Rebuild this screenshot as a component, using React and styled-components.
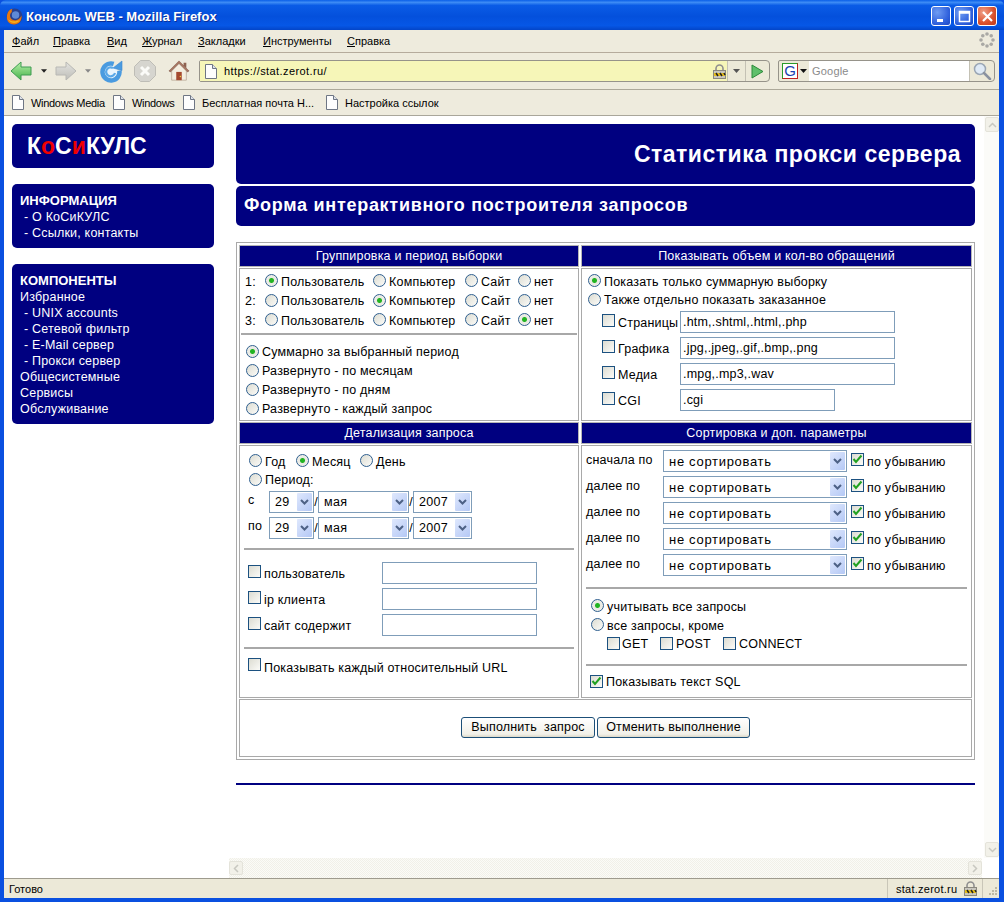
import React from "react";
import styled, { createGlobalStyle } from "styled-components";

const Global = createGlobalStyle`
  html, body { margin: 0; padding: 0; background: #fff; }
  body { font-family: "Liberation Sans", Arial, sans-serif; }
  #root { width: 1004px; height: 902px; overflow: hidden; }
  * { box-sizing: border-box; }
`;

const navy = "#000080";
const ui = `"Liberation Sans", Arial, sans-serif`;

/* ---------- window chrome ---------- */
const Win = styled.div`
  width: 1004px; height: 902px; display: flex; flex-direction: column;
  background: #0a50e0; overflow: hidden;
`;
const TitleBar = styled.div`
  height: 30px; flex: none; display: flex; align-items: center; padding: 2px 7px 0 6px;
  background: linear-gradient(180deg, #0a5fe8 0%, #3d8cf5 8%, #0a5ce6 18%, #0450dc 55%, #0657e6 85%, #0345c8 100%);
  border-radius: 6px 6px 0 0;
`;
const TitleText = styled.div`
  margin-left: 3px; flex: 1; color: #fff; font: bold 13px ${ui}; letter-spacing: 0;
  text-shadow: 1px 1px 0 #0a2f9a;
`;
const WinBtn = styled.div`
  width: 20px; height: 20px; margin-left: 3px; border: 1px solid #fff; border-radius: 3px;
  display: flex; align-items: center; justify-content: center;
  background: ${p => p.$close
    ? "radial-gradient(circle at 30% 30%, #f0a088, #d9502c 60%, #c23a18)"
    : "radial-gradient(circle at 30% 30%, #6f9cf2, #2f60dc 65%, #1c47c4)"};
`;
const Inner = styled.div`
  flex: 1; min-height: 0; display: flex; flex-direction: column;
  margin: 0 5px 4px 4px; background: #ece9d8;
`;
const MenuBar = styled.div`
  height: 23px; flex: none; display: flex; align-items: center; position: relative;
  border-bottom: 1px solid #b5ab9c; background: #eeebdd;
`;
const MenuItem = styled.span`
  width: ${p => p.$w}px; font: 11px ${ui}; color: #000; letter-spacing: 0;
  &:first-child { margin-left: 8px; }
  u { text-underline-offset: 1px; }
`;
const Throbber = styled.svg`
  position: absolute; right: 4px; top: 2px;
`;
const NavBar = styled.div`
  height: 37px; flex: none; display: flex; align-items: center;
  border-bottom: 1px solid #aca899; background: #eeebdd;
`;
const NavIcon = styled.svg`
  flex: none; margin-left: ${p => p.$ml || 0}px;
`;
const UrlBox = styled.div`
  margin-left: 9px; width: 571px; height: 22px; display: flex; align-items: stretch; flex: none;
  border: 1px solid #96938a; border-radius: 2px 4px 4px 2px; background: #ece9d8;
`;
const UrlField = styled.div`
  flex: 1; display: flex; align-items: center; background: #f6f6b8; padding-left: 5px; position: relative;
  font: 11px ${ui}; letter-spacing: 0.4px; color: #000;
`;
const UrlText = styled.span` margin-left: 7px; flex: 1; `;
const LockGap = styled.span` width: 1px; flex: none; `;
const UrlCell = styled.div`
  width: ${p => p.$w}px; flex: none; display: flex; align-items: center; justify-content: center;
  border-left: 1px solid #c4c1b4;
`;
const SearchBox = styled.div`
  margin-left: 8px; width: 217px; height: 22px; flex: none; display: flex; align-items: stretch;
  border: 1px solid #96938a; border-radius: 2px 4px 4px 2px; background: #ece9d8;
`;
const EngineCell = styled.div`
  width: 30px; flex: none; display: flex; align-items: center; padding-left: 3px; gap: 2px;
`;
const EngineLogo = styled.div`
  width: 16px; height: 16px; flex: none; border: 1px solid; border-color: #2a9a2a #c02020 #c02020 #2a9a2a; background: #fff;
  color: #1b3fb0; font: 15px/14px ${ui}; text-align: center; overflow: hidden;
`;
const SearchField = styled.div`
  width: 160px; flex: none; background: #fff; color: #8a8a8a; font: 11px ${ui}; padding-left: 3px;
  display: flex; align-items: center; letter-spacing: 0.2px;
`;
const SearchBtn = styled.div`
  flex: 1; display: flex; align-items: center; justify-content: center; border-left: 1px solid #c4c1b4;
`;
const BookBar = styled.div`
  height: 26px; flex: none; display: flex; align-items: center; background: #eeebdd;
  border-bottom: 1px solid #a9a69a; padding-left: 8px;
`;
const Bookmark = styled.div`
  width: ${p => p.$w}px; flex: none; display: flex; align-items: center; gap: 7px; font: 11px ${ui};
  color: #000; letter-spacing: ${p => p.$ls || 0}px; white-space: nowrap;
`;

/* ---------- page area ---------- */
const Viewport = styled.div`
  flex: 1; min-height: 0; background: #fff; position: relative; display: flex; flex-direction: column;
`;
const Page = styled.div`
  flex: 1; min-height: 0; display: flex; padding: 8px 0 0 8px; overflow: hidden;
`;
const Sidebar = styled.div`
  width: 202px; flex: none; display: flex; flex-direction: column; gap: 16px;
`;
const NavyBox = styled.div`
  background: ${navy}; border-radius: 5px; color: #fff;
`;
const LogoBox = styled(NavyBox)`
  height: 44px; padding: 9px 0 0 15px; font: bold 23px/26px ${ui}; letter-spacing: 0;
  span { color: #f00000; }
`;
const MenuBox = styled(NavyBox)`
  padding: 9px 8px 7px 8px; font: 12.500px/16px ${ui}; letter-spacing: 0.200px;
`;
const MenuHead = styled.div` font-weight: bold; font-size: 13px; letter-spacing: 0; `;
const MenuLink = styled.div` padding-left: ${p => p.$sub ? 4 : 0}px; white-space: nowrap; `;
const Main = styled.div`
  width: 739px; flex: none; margin-left: 22px; display: flex; flex-direction: column;
`;
const Banner = styled(NavyBox)`
  height: 60px; display: flex; align-items: center; justify-content: flex-end; padding: 0 14px 0 0;
  font: bold 23px ${ui}; letter-spacing: 0.500px;
`;
const SubBanner = styled(NavyBox)`
  margin-top: 2px; height: 40px; display: flex; align-items: center; padding: 0 0 2px 8px;
  font: bold 18px ${ui}; letter-spacing: 0.720px;
`;
const FormGrid = styled.div`
  margin-top: 16px; height: 518px; border: 1px solid #a9a9a9; padding: 2px;
  display: grid; grid-template-columns: 340px 391px; column-gap: 2px; row-gap: 1px;
  grid-template-rows: 22px 153px 22px 253px 58px;
  font: 12.500px ${ui}; letter-spacing: 0.200px; color: #000;
  background: #fff;
`;
const Head = styled.div`
  background: ${navy}; color: #fff; text-align: center; line-height: 21px; border: 1px solid #b5b5b5;
  font-size: 12.500px;
`;
const Cell = styled.div`
  border: 1px solid #a9a9a9; display: flex; flex-direction: column; min-width: 0;
  padding: ${p => p.$pad || "0"};
`;
const ButtonCell = styled(Cell)`
  grid-column: 1 / 3; flex-direction: row; justify-content: center; align-items: center; gap: 2px;
  padding-left: 0; padding-bottom: 2px;
`;
const Rule = styled.div`
  height: 2px; background: #a8a8a8; flex: none;
  margin: ${p => p.$m};
`;
const Row = styled.div`
  display: flex; align-items: center; height: ${p => p.$h || 20}px; flex: none; white-space: nowrap;
  padding-left: ${p => p.$pl || 0}px; gap: ${p => p.$gap || 0}px;
`;
const Fixed = styled.div`
  width: ${p => p.$w}px; flex: none; display: flex; align-items: center;
`;
const Lbl = styled.span`
  margin-left: ${p => p.$ml === undefined ? 3 : p.$ml}px;
  position: relative; top: ${p => p.$t || 0}px;
`;
const RadioDot = styled.span`
  width: 13px; height: 13px; flex: none; border-radius: 50%; border: 1px solid #2f5f8f;
  background: ${p => p.$on
    ? "radial-gradient(circle, #22b422 0 2px, #e9e9e2 3px, #f4f4ee 100%)"
    : "linear-gradient(135deg, #dcdcd2, #fbfbf8)"};
  position: relative; top: -1px;
`;
const CheckBox = styled.span`
  width: 13px; height: 13px; flex: none; border: 1px solid #1c5180; position: relative; top: ${p => p.$t === undefined ? -1 : p.$t}px;
  margin-left: ${p => p.$ml || 0}px;
  background: linear-gradient(135deg, #dcdcd2, #fbfbf8); display: flex; align-items: center; justify-content: center;
`;
const TextBox = styled.input`
  width: ${p => p.$w}px; height: 22px; flex: none; border: 1px solid #7f9db9; padding: 0 0 1px 2px; margin: 0;
  font: 12.500px ${ui}; letter-spacing: 0.200px; color: #000; background: #fff; outline: none;
`;
const SelectBox = styled.div`
  width: ${p => p.$w}px; height: 22px; flex: none; border: 1px solid #7f9db9; background: #fff;
  display: flex; align-items: center; justify-content: space-between; padding: 1px 1px 1px 5px;
  font-size: ${p => p.$wide ? 13 : 12.500}px; letter-spacing: ${p => p.$wide ? 0.700 : 0.300}px;
`;
const SelectBtn = styled.span`
  width: 15px; height: 18px; flex: none; background: linear-gradient(135deg, #dfe8fd, #b4c8f5);
  display: flex; align-items: center; justify-content: center; border-radius: 1px;
`;
const Slash = styled.span`
  width: ${p => p.$w || 4}px; flex: none; text-align: center;
`;
const Side = styled.span`
  width: ${p => p.$w}px; flex: none; position: relative; top: ${p => p.$t || 0}px;
`;
const SubmitBtn = styled.div`
  height: 21px; width: ${p => p.$w}px; border: 1px solid #1c4f78; border-radius: 3px;
  background: linear-gradient(180deg, #fff, #f1f0e8 85%, #dcd8c8); display: flex; align-items: center; justify-content: center;
  font: 12.500px ${ui}; letter-spacing: 0.150px; white-space: pre;
`;
const NavyLine = styled.div`
  margin-top: 23px; height: 2px; background: ${navy};
`;
const VScroll = styled.div`
  position: absolute; right: 0; top: 0; bottom: 20px; width: 15px; display: flex; flex-direction: column;
  justify-content: space-between; align-items: flex-end; padding: 1px 0; background: #fbfbf8;
`;
const HScroll = styled.div`
  position: absolute; left: 225px; right: 17px; bottom: 0; height: 20px; display: flex;
  justify-content: space-between; align-items: center;
  background: repeating-conic-gradient(#f1f0e8 0 25%, #fbfbf7 0 50%) 0 0 / 2px 2px;
`;
const ScrollBtn = styled.div`
  width: 14px; height: ${p => p.$h || 16}px; background: #f2f1e9; border: 1px solid #e4e3da; border-radius: 2px;
  display: flex; align-items: center; justify-content: center;
`;
const StatusBar = styled.div`
  height: 20px; flex: none; display: flex; align-items: center; background: #ece9d8;
  border-top: 1px solid #9e9b8e; font: 11px ${ui}; color: #000; padding-left: 5px;
`;
const StatusText = styled.div` flex: 1; `;
const StatusCell = styled.div`
  width: 96px; height: 100%; flex: none; display: flex; align-items: center; gap: 7px; padding-left: 8px;
  border-left: 1px solid #c9c6b8; border-right: 1px solid #c9c6b8; letter-spacing: 0.250px; white-space: nowrap;
`;
const Grip = styled.svg` margin: 4px 1px 0 3px; flex: none; `;

/* ---------- drawings ---------- */
const Doc = () => (
  <svg width="12" height="15" viewBox="0 0 12 15">
    <path d="M.5.5h7l4 4v10H.5z" fill="#fdfdfd" stroke="#6e7684" />
    <path d="M7.500.5v4h4" fill="#dfe3ea" stroke="#6e7684" />
  </svg>
);
const Lock = ({ s = 13 }) => (
  <svg width={s} height={s + 2} viewBox="0 0 13 15">
    <path d="M3 7V4.500a3.500 3.500 0 0 1 7 0V7" fill="none" stroke="#8f8f8f" strokeWidth="1.600" />
    <rect x="0.500" y="6.500" width="12" height="8" fill="#c9c7bd" stroke="#8a887e" />
    <path d="M1 9h11v3H1z" fill="#e6bd1a" />
    <path d="M3 9l2 3M7 9l2 3M11 9l1 2" stroke="#222" strokeWidth="1.500" />
  </svg>
);
const Arrow = ({ c = "#222" }) => (
  <svg width="7" height="4" viewBox="0 0 7 4"><path d="M0 0h7L3.500 4z" fill={c} /></svg>
);
const Chevron = () => (
  <svg width="9" height="6" viewBox="0 0 9 6"><path d="M1 1l3.500 3.500L8 1" fill="none" stroke="#4d6185" strokeWidth="2" /></svg>
);
const Tick = () => (
  <svg width="11" height="10" viewBox="0 0 11 10"><path d="M1.500 5l2.500 3L9.500 1.500" fill="none" stroke="#21a121" strokeWidth="2" /></svg>
);
const Fox = () => (
  <svg width="17" height="17" viewBox="0 0 16 16">
    <circle cx="8" cy="8" r="7.500" fill="#27408f" />
    <circle cx="9" cy="6.500" r="3.500" fill="#5f8ad6" />
    <path d="M.8 9C.8 4.500 3 1.500 6 .8c-.6 1-.7 2-.5 3C4 5 3.500 6.500 4 8.500c.8 2.500 3.500 3.500 6 2.800 2-.6 3.500-2 4.500-4.300.8 4.800-2.500 8.500-7 8.500C3.500 15.500.8 12.800.8 9z" fill="#e8780f" />
    <path d="M2 10c1 3 3 4 6 4 2 0 4-1 5-3-3 2-9 2-11-1z" fill="#f6b21c" />
  </svg>
);
const Back = ({ grey }) => (
  <NavIcon $ml={grey ? 8 : 6} width="22" height="22" viewBox="0 0 22 22">
    <defs>
      <linearGradient id={grey ? "gf" : "gb"} x1="0" y1="0" x2="0" y2="1">
        <stop offset="0" stopColor={grey ? "#e4e4e0" : "#b6f0a8"} />
        <stop offset="1" stopColor={grey ? "#bdbdb8" : "#46b24a"} />
      </linearGradient>
    </defs>
    <path d={grey ? "M1 7h10V2l10 9-10 9v-5H1z" : "M21 7H11V2L1 11l10 9v-5h10z"}
      fill={`url(#${grey ? "gf" : "gb"})`} stroke={grey ? "#b8b8b4" : "#3f9c52"} />
  </NavIcon>
);
const Reload = () => (
  <NavIcon $ml={9} width="23" height="23" viewBox="0 0 23 23">
    <circle cx="11" cy="12" r="6.500" fill="#eaf5fd" />
    <circle cx="11" cy="12" r="8.500" fill="none" stroke="#4a9be0" strokeWidth="4.500" strokeDasharray="44 10" transform="rotate(-10 11 12)" />
    <path d="M13 8l9-7v9.500z" fill="#4a9be0" stroke="#3a86d0" strokeWidth=".6" />
    <path d="M15 13a4.500 4.500 0 1 1-2-5" fill="none" stroke="#5aa8e8" strokeWidth="2.200" />
  </NavIcon>
);
const Stop = () => (
  <NavIcon $ml={11} width="22" height="22" viewBox="0 0 22 22">
    <path d="M6.500 .5h9l6 6v9l-6 6h-9l-6-6v-9z" fill="#d6d5cf" stroke="#bebdb6" />
    <path d="M7 7l8 8M15 7l-8 8" stroke="#fbfbf8" strokeWidth="3" />
  </NavIcon>
);
const Home = () => (
  <NavIcon $ml={12} width="22" height="22" viewBox="0 0 24 24">
    <path d="M17 3h3v6l-3-3z" fill="#8e6250" />
    <path d="M12 1L1 12l2 1 9-9 9 9 2-1z" fill="#a87662" stroke="#7e5546" strokeWidth=".6" />
    <path d="M4 12l8-8 8 8v10H4z" fill="#f4eee0" stroke="#a08a78" strokeWidth=".6" />
    <rect x="9" y="13" width="6" height="9" fill="#a5492f" />
    <circle cx="13.500" cy="18" r=".8" fill="#f0d040" />
  </NavIcon>
);
const Magnifier = () => (
  <svg width="19" height="18" viewBox="0 0 19 18">
    <circle cx="7" cy="7" r="5.500" fill="#dfeaf6" stroke="#9aa6b4" strokeWidth="1.500" />
    <path d="M11 11l6 6" stroke="#8a92a0" strokeWidth="2.500" strokeLinecap="round" />
  </svg>
);
const Go = () => (
  <svg width="13" height="15" viewBox="0 0 13 15"><path d="M1 1l11 6.500L1 14z" fill="#5fbf6a" stroke="#2c8a3a" /></svg>
);
const Spinner = () => (
  <Throbber width="16" height="16" viewBox="0 0 16 16">
    {[[8, 2], [12.200, 3.800], [14, 8], [12.200, 12.200], [8, 14], [3.800, 12.200], [2, 8], [3.800, 3.800]].map(([x, y], i) => (
      <circle key={i} cx={x} cy={y} r="1.800" fill="#a9a8a4" />
    ))}
  </Throbber>
);

/* ---------- form bits ---------- */
const Opt = ({ on, w, children }) => (
  <Fixed $w={w}><RadioDot $on={on} /><Lbl>{children}</Lbl></Fixed>
);
const Sel = ({ w, wide, children }) => (
  <SelectBox $w={w} $wide={wide}><span>{children}</span><SelectBtn><Chevron /></SelectBtn></SelectBox>
);
const Chk = ({ on, t, ml }) => <CheckBox $t={t} $ml={ml}>{on ? <Tick /> : null}</CheckBox>;

const GroupRow = ({ n, pick }) => (
  <Row $h={19.500} $pl={5}>
    <Side $w={20}>{n}:</Side>
    {[["Пользователь", 108], ["Компьютер", 92], ["Сайт", 53], ["нет", 50]].map(([t, w], i) => (
      <Opt key={t} w={w} on={i === pick}>{t}</Opt>
    ))}
  </Row>
);
const ExtRow = ({ label, value, w }) => (
  <Row $h={26} $pl={20}>
    <Fixed $w={78}><Chk t={-2} /><Lbl $t={1}>{label}</Lbl></Fixed>
    <TextBox $w={w} readOnly value={value} />
  </Row>
);
const DateRow = ({ label }) => (
  <Row $h={26} $pl={8}>
    <Side $w={21} $t={-2}>{label}</Side>
    <Sel w={45}>29</Sel><Slash>/</Slash><Sel w={91}>мая</Sel><Slash>/</Slash><Sel w={59}>2007</Sel>
  </Row>
);
const FilterRow = ({ label }) => (
  <Row $h={26} $pl={8}>
    <Fixed $w={134}><Chk t={-2} /><Lbl $t={1}>{label}</Lbl></Fixed>
    <TextBox $w={155} readOnly />
  </Row>
);
const SortRow = ({ label }) => (
  <Row $h={26} $pl={4}>
    <Side $w={77} $t={-1}>{label}</Side>
    <Sel w={184} wide>не сортировать</Sel>
    <Fixed $w={100}><Chk on t={-2} ml={4} /><Lbl $t={1}>по убыванию</Lbl></Fixed>
  </Row>
);

export default function App() {
  return (
    <Win>
      <Global />
      <TitleBar>
        <Fox />
        <TitleText>Консоль WEB - Mozilla Firefox</TitleText>
        <WinBtn>
          <svg width="13" height="13" viewBox="0 0 13 13"><rect x="2" y="9" width="6" height="3" fill="#fff" /></svg>
        </WinBtn>
        <WinBtn>
          <svg width="13" height="13" viewBox="0 0 13 13"><path d="M1.500 1.500h10v10h-10zM1.500 3h10" fill="none" stroke="#fff" strokeWidth="1.500" /></svg>
        </WinBtn>
        <WinBtn $close>
          <svg width="13" height="13" viewBox="0 0 13 13"><path d="M2 2l9 9M11 2l-9 9" stroke="#fff" strokeWidth="2.200" /></svg>
        </WinBtn>
      </TitleBar>
      <Inner>
        <MenuBar>
          {[["Ф", "айл", 41], ["П", "равка", 54], ["В", "ид", 35], ["Ж", "урнал", 56], ["З", "акладки", 65], ["И", "нструменты", 84], ["С", "правка", 50]].map(([a, b, w]) => (
            <MenuItem key={a} $w={w}><u>{a}</u>{b}</MenuItem>
          ))}
          <Spinner />
        </MenuBar>
        <NavBar>
          <Back />
          <NavIcon $ml={9} width="6" height="4" viewBox="0 0 7 4"><path d="M0 0h7L3.500 4z" fill="#222" /></NavIcon>
          <Back grey />
          <NavIcon $ml={8} width="6" height="4" viewBox="0 0 7 4"><path d="M0 0h7L3.500 4z" fill="#888" /></NavIcon>
          <Reload />
          <Stop />
          <Home />
          <UrlBox>
            <UrlField>
              <Doc />
              <UrlText>https://stat.zerot.ru/</UrlText>
              <Lock />
              <LockGap />
            </UrlField>
            <UrlCell $w={18}><Arrow c="#555" /></UrlCell>
            <UrlCell $w={24}><Go /></UrlCell>
          </UrlBox>
          <SearchBox>
            <EngineCell><EngineLogo>G</EngineLogo><Arrow c="#111" /></EngineCell>
            <SearchField>Google</SearchField>
            <SearchBtn><Magnifier /></SearchBtn>
          </SearchBox>
        </NavBar>
        <BookBar>
          <Bookmark $w={101} $ls={-0.300}><Doc />Windows Media</Bookmark>
          <Bookmark $w={70} $ls={-0.300}><Doc />Windows</Bookmark>
          <Bookmark $w={143}><Doc />Бесплатная почта Н...</Bookmark>
          <Bookmark $w={120}><Doc />Настройка ссылок</Bookmark>
        </BookBar>
        <Viewport>
          <Page>
            <Sidebar>
              <LogoBox>К<span>о</span>С<span>и</span>КУЛС</LogoBox>
              <MenuBox>
                <MenuHead>ИНФОРМАЦИЯ</MenuHead>
                <MenuLink $sub> - О КоСиКУЛС</MenuLink>
                <MenuLink $sub> - Ссылки, контакты</MenuLink>
              </MenuBox>
              <MenuBox>
                <MenuHead>КОМПОНЕНТЫ</MenuHead>
                <MenuLink>Избранное</MenuLink>
                <MenuLink $sub> - UNIX accounts</MenuLink>
                <MenuLink $sub> - Сетевой фильтр</MenuLink>
                <MenuLink $sub> - E-Mail сервер</MenuLink>
                <MenuLink $sub> - Прокси сервер</MenuLink>
                <MenuLink>Общесистемные</MenuLink>
                <MenuLink>Сервисы</MenuLink>
                <MenuLink>Обслуживание</MenuLink>
              </MenuBox>
            </Sidebar>
            <Main>
              <Banner>Статистика прокси сервера</Banner>
              <SubBanner>Форма интерактивного построителя запросов</SubBanner>
              <FormGrid>
                <Head>Группировка и период выборки</Head>
                <Head>Показывать объем и кол-во обращений</Head>
                <Cell $pad="3px 0 0 0">
                  <GroupRow n={1} pick={0} />
                  <GroupRow n={2} pick={1} />
                  <GroupRow n={3} pick={3} />
                  <Rule $m="2.500px 1px 7.500px 1px" />
                  <Row $h={19} $pl={6}><RadioDot $on /><Lbl>Суммарно за выбранный период</Lbl></Row>
                  <Row $h={19} $pl={6}><RadioDot /><Lbl>Развернуто - по месяцам</Lbl></Row>
                  <Row $h={19} $pl={6}><RadioDot /><Lbl>Развернуто - по дням</Lbl></Row>
                  <Row $h={19} $pl={6}><RadioDot /><Lbl>Развернуто - каждый запрос</Lbl></Row>
                </Cell>
                <Cell $pad="3px 0 0 0">
                  <Row $h={19.500} $pl={6}><RadioDot $on /><Lbl>Показать только суммарную выборку</Lbl></Row>
                  <Row $h={17.500} $pl={6}><RadioDot /><Lbl>Также отдельно показать заказанное</Lbl></Row>
                  <ExtRow label="Страницы" value=".htm,.shtml,.html,.php" w={215} />
                  <ExtRow label="Графика" value=".jpg,.jpeg,.gif,.bmp,.png" w={215} />
                  <ExtRow label="Медиа" value=".mpg,.mp3,.wav" w={215} />
                  <ExtRow label="CGI" value=".cgi" w={155} />
                </Cell>
                <Head>Детализация запроса</Head>
                <Head>Сортировка и доп. параметры</Head>
                <Cell $pad="6px 0 0 0">
                  <Row $h={19.500} $pl={9}>
                    <Opt w={47}>Год</Opt><Opt w={64} on>Месяц</Opt><Opt w={60}>День</Opt>
                  </Row>
                  <Row $h={17.500} $pl={9}><Opt w={100}>Период:</Opt></Row>
                  <DateRow label="с" />
                  <DateRow label="по" />
                  <Rule $m="7px 4px 10px 4px" />
                  <FilterRow label="пользователь" />
                  <FilterRow label="ip клиента" />
                  <FilterRow label="сайт содержит" />
                  <Rule $m="9px 4px 8px 4px" />
                  <Row $h={19.500} $pl={8}><Chk t={-2} /><Lbl $t={1}>Показывать каждый относительный URL</Lbl></Row>
                </Cell>
                <Cell $pad="2px 0 0 0">
                  <SortRow label="сначала по" />
                  <SortRow label="далее по" />
                  <SortRow label="далее по" />
                  <SortRow label="далее по" />
                  <SortRow label="далее по" />
                  <Rule $m="9px 4px 8px 4px" />
                  <Row $h={19.500} $pl={9}><RadioDot $on /><Lbl>учитывать все запросы</Lbl></Row>
                  <Row $h={18} $pl={9}><RadioDot /><Lbl>все запросы, кроме</Lbl></Row>
                  <Row $h={19} $pl={25}>
                    <Fixed $w={53}><Chk /><Lbl $ml={2}>GET</Lbl></Fixed>
                    <Fixed $w={63}><Chk /><Lbl>POST</Lbl></Fixed>
                    <Fixed $w={90}><Chk /><Lbl>CONNECT</Lbl></Fixed>
                  </Row>
                  <Rule $m="10px 4px 7px 4px" />
                  <Row $h={19} $pl={8}><Chk on /><Lbl>Показывать текст SQL</Lbl></Row>
                </Cell>
                <ButtonCell>
                  <SubmitBtn $w={134}>Выполнить  запрос</SubmitBtn>
                  <SubmitBtn $w={153}>Отменить выполнение</SubmitBtn>
                </ButtonCell>
              </FormGrid>
              <NavyLine />
            </Main>
          </Page>
          <VScroll>
            <ScrollBtn $h={15}><svg width="9" height="6" viewBox="0 0 9 6"><path d="M1 5l3.500-3.500L8 5" fill="none" stroke="#c8c8c0" strokeWidth="1.500" /></svg></ScrollBtn>
            <ScrollBtn $h={15}><svg width="9" height="6" viewBox="0 0 9 6"><path d="M1 1l3.500 3.500L8 1" fill="none" stroke="#c8c8c0" strokeWidth="1.500" /></svg></ScrollBtn>
          </VScroll>
          <HScroll>
            <ScrollBtn $h={14}><svg width="6" height="9" viewBox="0 0 6 9"><path d="M5 1L1.500 4.500 5 8" fill="none" stroke="#c8c8c0" strokeWidth="1.500" /></svg></ScrollBtn>
            <ScrollBtn $h={14}><svg width="6" height="9" viewBox="0 0 6 9"><path d="M1 1l3.500 3.500L1 8" fill="none" stroke="#c8c8c0" strokeWidth="1.500" /></svg></ScrollBtn>
          </HScroll>
        </Viewport>
        <StatusBar>
          <StatusText>Готово</StatusText>
          <StatusCell>stat.zerot.ru<Lock /></StatusCell>
          <Grip width="12" height="12" viewBox="0 0 12 12">
            <path d="M9 2h2v2H9zM6 5h2v2H6zM9 5h2v2H9zM3 8h2v2H3zM6 8h2v2H6zM9 8h2v2H9z" fill="#bdb9a6" />
          </Grip>
        </StatusBar>
      </Inner>
    </Win>
  );
}
